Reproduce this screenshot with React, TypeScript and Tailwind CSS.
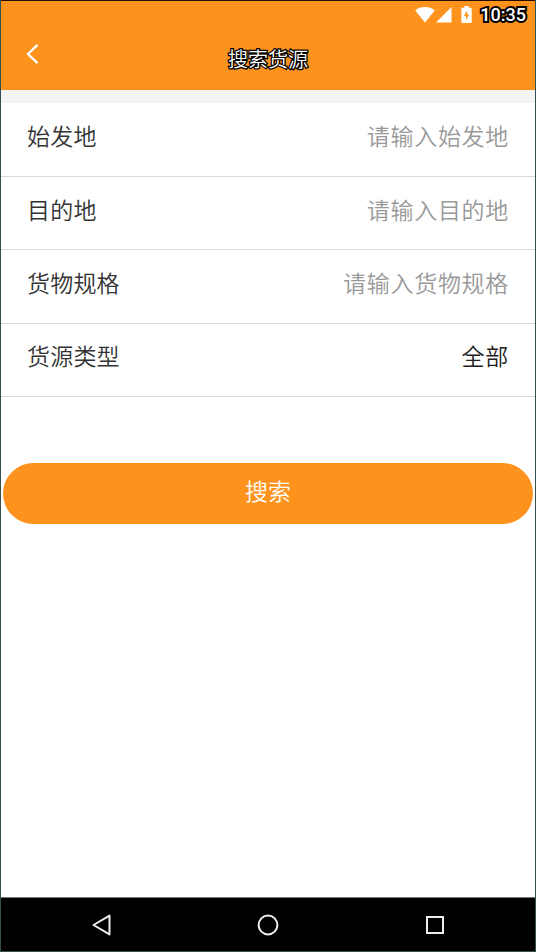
import { clsx } from "clsx";

type Field = {
  label: string;
  placeholder?: string;
  value?: string;
  className: string;
};

const fields: Field[] = [
  { label: "始发地", placeholder: "请输入始发地", className: "h-[74px] pb-[9px]" },
  { label: "目的地", placeholder: "请输入目的地", className: "h-[73px] pb-[9px]" },
  { label: "货物规格", placeholder: "请输入货物规格", className: "h-[74px] pb-[10px]" },
  { label: "货源类型", value: "全部", className: "h-[73px] pb-[10px]" },
];

const StatusBar = () => (
  <div className="flex h-[27px] items-center justify-end pr-[9px]">
    <svg width="20" height="16" viewBox="0 0 20 16" fill="#fff">
      <path d="M0.2 3.4C5.8-1 14.2-1 19.8 3.4L10 15.4Z" />
    </svg>
    <svg className="ml-px" width="16" height="16" viewBox="0 0 16 16" fill="#fff">
      <path d="M15.5 0V15.5H0Z" />
    </svg>
    <svg className="ml-[9px]" width="11" height="17" viewBox="0 0 11 17">
      <path
        d="M3.3 0H7.7V1.8H9.8Q10.7 1.8 10.7 2.8V16Q10.7 17 9.8 17H1.2Q0.3 17 0.3 16V2.8Q0.3 1.8 1.2 1.8H3.3Z"
        fill="#fff"
      />
      <path d="M6.2 4.5L2.9 10H5V14L8.2 8.4H6.2Z" fill="#fd931d" />
    </svg>
    <span className="ml-2 font-['Roboto',sans-serif] text-[18px] leading-none font-medium text-white [-webkit-text-stroke:4px_#000] [paint-order:stroke_fill]">
      10:35
    </span>
  </div>
);

const Header = () => (
  <header className="h-[90px] border-t border-[#260d05] bg-[#fd931d]">
    <StatusBar />
    <div className="grid h-[62px] grid-cols-[1fr_auto_1fr] items-center">
      <button className="mb-[11px] ml-[25px] w-4">
        <svg width="14" height="22" viewBox="0 0 14 22" fill="none" stroke="#fff" strokeWidth="2.4">
          <path d="M11.5 1.8L2 11L11.5 20.2" />
        </svg>
      </button>
      <h1 className="text-[20px] leading-7 text-white [-webkit-text-stroke:2.6px_#000] [paint-order:stroke_fill]">
        搜索货源
      </h1>
    </div>
  </header>
);

const FieldRow = ({ field }: { field: Field }) => (
  <div
    className={clsx(
      "flex items-center justify-between border-b border-[#d9d9d9] px-[26px] text-[23px] leading-8",
      field.className,
    )}
  >
    <span className="tracking-[0.2px] text-[#333]">{field.label}</span>
    <span
      className={clsx(
        "tracking-[0.7px]",
        field.value ? "text-[#222]" : "text-[#999]",
      )}
    >
      {field.value ?? field.placeholder}
    </span>
  </div>
);

const NavigationBar = () => (
  <nav className="flex h-[55px] items-center justify-between border-t border-b border-t-[#777] border-b-[#34504f] bg-black pr-[89px] pl-[89px]">
    <svg width="22" height="24" viewBox="0 0 22 24" fill="none" stroke="#eee" strokeWidth="2">
      <path d="M19.5 2.6V21.4L3.5 12Z" strokeLinejoin="round" />
    </svg>
    <svg width="24" height="24" viewBox="0 0 24 24" fill="none" stroke="#eee" strokeWidth="2">
      <circle cx="12" cy="12" r="9.4" />
    </svg>
    <svg width="22" height="24" viewBox="0 0 22 24" fill="none" stroke="#eee" strokeWidth="2">
      <rect x="3" y="4" width="16" height="16" />
    </svg>
  </nav>
);

export default function App() {
  return (
    <div className="flex h-[952px] w-[536px] flex-col border-x border-[#34504f] bg-white font-['Noto_Sans_CJK_SC',sans-serif] font-[350]">
      <Header />
      <div className="h-[13px] bg-[#f4f4f4]" />
      <main className="flex-1">
        {fields.map((field) => (
          <FieldRow key={field.label} field={field} />
        ))}
        <div className="mt-[66px] px-0.5">
          <button className="flex h-[61px] w-full items-center justify-center rounded-full bg-[#fd931d] pb-2 text-[23px] leading-8 text-white">
            搜索
          </button>
        </div>
      </main>
      <NavigationBar />
    </div>
  );
}
